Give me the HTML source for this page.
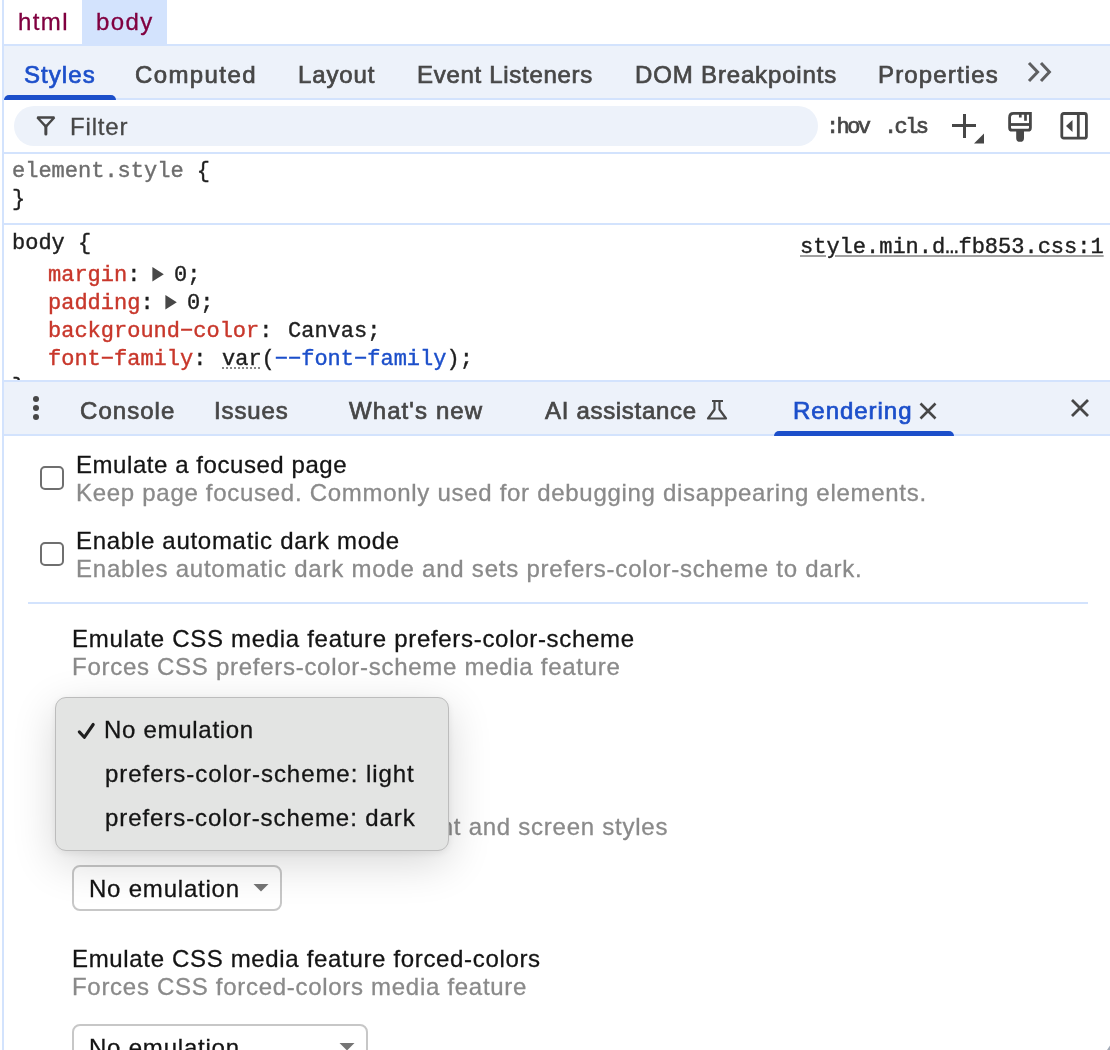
<!DOCTYPE html>
<html><head><meta charset="utf-8">
<style>
*{margin:0;padding:0;box-sizing:border-box}
html,body{width:1110px;height:1050px;overflow:hidden;background:#fff}
body{position:relative;font-family:"Liberation Sans",sans-serif;color:#1f1f1f;-webkit-font-smoothing:antialiased}
.a{position:absolute;white-space:nowrap;will-change:transform}
.t{font-size:24px;line-height:28px}
.m{font-family:"Liberation Mono",monospace;font-size:22px;line-height:28px;-webkit-text-stroke:0.4px currentColor}
.bd{background:#d3e3fd}
</style></head><body>
<!-- left border -->
<div class="a bd" style="left:2px;top:0;width:2px;height:1050px"></div>
<!-- breadcrumb -->
<div class="a bd" style="left:82px;top:0;width:85px;height:44px"></div>
<div class="a bd" style="left:4px;top:44px;width:1106px;height:2px"></div>
<!-- tab bar -->
<div class="a" style="left:4px;top:46px;width:1106px;height:52px;background:#edf2fa"></div>
<div class="a bd" style="left:4px;top:98px;width:1106px;height:2px"></div>
<div class="a" style="left:4px;top:95px;width:112px;height:5px;background:#1c4fca;border-radius:5px 5px 0 0"></div>
<svg class="a" style="left:1026px;top:60px" width="30" height="24" viewBox="0 0 30 24"><path d="M3 3 L11.6 12 L3 21 M15 3 L23.4 12 L15 21" fill="none" stroke="#5e5f61" stroke-width="3"/></svg>
<!-- filter bar -->
<div class="a" style="left:14px;top:106px;width:804px;height:40px;border-radius:20px;background:#edf2fa"></div>
<svg class="a" style="left:34px;top:114px" width="24" height="24" viewBox="0 0 24 24"><path d="M3.4 3.5 H20.3 L11.85 12.6 Z" fill="none" stroke="#474747" stroke-width="2.4" stroke-linejoin="bevel"/><path d="M11.85 12 V20" fill="none" stroke="#474747" stroke-width="3" stroke-linecap="round"/></svg>
<div class="a" style="left:826px;top:114px;font-size:22px;line-height:28px;color:#474747;font-family:'Liberation Mono',monospace;letter-spacing:-2.6px;-webkit-text-stroke:0.7px #474747">:hov</div>
<div class="a" style="left:884px;top:114px;font-size:22px;line-height:28px;color:#474747;font-family:'Liberation Mono',monospace;letter-spacing:-2.6px;-webkit-text-stroke:0.7px #474747">.cls</div>
<svg class="a" style="left:948px;top:110px" width="40" height="36" viewBox="0 0 40 36"><path d="M4 15.5 H28 M16.5 4 V28" fill="none" stroke="#474747" stroke-width="3"/><path d="M26 33.5 L36 23.5 V33.5 Z" fill="#474747"/></svg>
<svg class="a" style="left:1004px;top:108px" width="32" height="38" viewBox="0 0 32 38"><path d="M9.6 5.4 H26.4 V19.7 Q26.4 22.2 23.9 22.2 H8.1 Q5.6 22.2 5.6 19.7 V9.4 Q5.6 5.4 9.6 5.4 Z" fill="none" stroke="#474747" stroke-width="2.8"/><path d="M5 16.5 H27" stroke="#474747" stroke-width="2.8"/><path d="M16.3 5 V9.6 M21.5 5 V12.7" fill="none" stroke="#474747" stroke-width="2.7"/><path d="M12.2 22 H20 V29.9 Q20 33.8 16.1 33.8 Q12.2 33.8 12.2 29.9 Z" fill="#474747"/></svg>
<svg class="a" style="left:1056px;top:108px" width="36" height="36" viewBox="0 0 36 36"><rect x="5.8" y="5.5" width="24.6" height="24.7" rx="2" fill="none" stroke="#474747" stroke-width="2.8"/><path d="M22.3 5 V31" stroke="#474747" stroke-width="2.8"/><path d="M10 18 L16.5 12 V24 Z" fill="#474747"/></svg>
<div class="a bd" style="left:4px;top:152px;width:1106px;height:2px"></div>
<!-- element.style -->
<div class="a m" style="left:12px;top:158px"><span style="color:#6e6e6e">element.style</span> {</div>
<div class="a m" style="left:12px;top:186px">}</div>
<div class="a bd" style="left:4px;top:223px;width:1106px;height:2px"></div>
<!-- body rule -->
<div class="a m" style="left:12px;top:230px">body {</div>
<div class="a m" style="left:800px;top:234px;text-decoration:underline;text-decoration-color:#a0a0a0">style.min.d…fb853.css:1</div>
<div class="a m" style="left:48px;top:262px"><span style="color:#c8372b">margin</span>:</div>
<svg class="a" style="left:150px;top:265px" width="16" height="20" viewBox="0 0 16 20"><path d="M2.4 2 L13.8 9.3 L2.4 16.6 Z" fill="#474747"/></svg>
<div class="a m" style="left:174px;top:262px">0;</div>
<div class="a m" style="left:48px;top:290px"><span style="color:#c8372b">padding</span>:</div>
<svg class="a" style="left:163px;top:293px" width="16" height="20" viewBox="0 0 16 20"><path d="M2.4 2 L13.8 9.3 L2.4 16.6 Z" fill="#474747"/></svg>
<div class="a m" style="left:187px;top:290px">0;</div>
<div class="a m" style="left:48px;top:318px"><span style="color:#c8372b">background−color</span>:</div>
<div class="a m" style="left:288.1px;top:318px">Canvas;</div>
<div class="a m" style="left:48px;top:346px"><span style="color:#c8372b">font−family</span>:</div>
<div class="a m" style="left:222.1px;top:346px"><span style="text-decoration:underline dotted #888">var</span>(<span style="color:#1c4fca">−−font−family</span>);</div>
<div class="a m" style="left:12px;top:374px">}</div>
<!-- drawer -->
<div class="a bd" style="left:4px;top:380px;width:1106px;height:2px"></div>
<div class="a" style="left:4px;top:382px;width:1106px;height:52px;background:#edf2fa"></div>
<div class="a bd" style="left:4px;top:434px;width:1106px;height:2px"></div>
<div class="a" style="left:33px;top:396px;width:6px;height:6px;border-radius:3px;background:#474747"></div>
<div class="a" style="left:33px;top:405px;width:6px;height:6px;border-radius:3px;background:#474747"></div>
<div class="a" style="left:33px;top:414px;width:6px;height:6px;border-radius:3px;background:#474747"></div>
<svg class="a" style="left:704px;top:398px" width="26" height="24" viewBox="0 0 26 24"><path d="M8 3 H19 M10.5 3 V11.5 L4 20.5 H22 L15.5 11.5 V3" fill="none" stroke="#474747" stroke-width="2.2" stroke-linejoin="round"/></svg>
<svg class="a" style="left:916px;top:399px" width="24" height="24" viewBox="0 0 24 24"><path d="M4.5 4.5 L19.5 19.5 M19.5 4.5 L4.5 19.5" fill="none" stroke="#474747" stroke-width="2.6"/></svg>
<div class="a" style="left:774px;top:431px;width:180px;height:5px;background:#1c4fca;border-radius:5px 5px 0 0"></div>
<svg class="a" style="left:1068px;top:396px" width="24" height="24" viewBox="0 0 24 24"><path d="M4 4 L20 20 M20 4 L4 20" fill="none" stroke="#474747" stroke-width="2.8"/></svg>
<!-- rendering content -->
<div class="a" style="left:40px;top:466px;width:24px;height:24px;border:2px solid #6f6f6f;border-radius:5px"></div>
<div class="a" style="left:40px;top:542px;width:24px;height:24px;border:2px solid #6f6f6f;border-radius:5px"></div>
<div class="a bd" style="left:28px;top:602px;width:1060px;height:2px"></div>
<div class="a" style="left:72px;top:705px;width:210px;height:46px;border:2px solid #c7c7c7;border-radius:8px"></div>
<div class="a" style="left:72px;top:865px;width:210px;height:46px;border:2px solid #c7c7c7;border-radius:8px"></div>
<svg class="a" style="left:252px;top:882px" width="18" height="12" viewBox="0 0 18 12"><path d="M1.5 2 H16.5 L9 9.5 Z" fill="#757575"/></svg>
<div class="a" style="left:72px;top:1024px;width:296px;height:46px;border:2px solid #c7c7c7;border-radius:8px"></div>
<svg class="a" style="left:338px;top:1041px" width="18" height="12" viewBox="0 0 18 12"><path d="M1.5 2 H16.5 L9 9.5 Z" fill="#757575"/></svg>
<div class="a t" style="left:18.15px;top:8.30px;color:#800040;letter-spacing:1.400px;-webkit-text-stroke:0.3px #800040;">html</div>
<div class="a t" style="left:95.65px;top:8.30px;color:#800040;letter-spacing:1.400px;-webkit-text-stroke:0.3px #800040;">body</div>
<div class="a t" style="left:23.85px;top:60.50px;color:#1c4fca;letter-spacing:1.060px;-webkit-text-stroke:0.7px #1c4fca;">Styles</div>
<div class="a t" style="left:135.35px;top:60.50px;color:#474747;letter-spacing:1.400px;-webkit-text-stroke:0.7px #474747;">Computed</div>
<div class="a t" style="left:298.35px;top:60.50px;color:#474747;letter-spacing:0.860px;-webkit-text-stroke:0.7px #474747;">Layout</div>
<div class="a t" style="left:417.35px;top:60.50px;color:#474747;letter-spacing:0.700px;-webkit-text-stroke:0.7px #474747;">Event Listeners</div>
<div class="a t" style="left:634.85px;top:60.50px;color:#474747;letter-spacing:0.843px;-webkit-text-stroke:0.7px #474747;">DOM Breakpoints</div>
<div class="a t" style="left:878.35px;top:61.00px;color:#474747;letter-spacing:1.144px;-webkit-text-stroke:0.7px #474747;">Properties</div>
<div class="a t" style="left:69.65px;top:112.80px;color:#474747;letter-spacing:0.840px;-webkit-text-stroke:0.3px #474747;">Filter</div>
<div class="a t" style="left:80.35px;top:396.80px;color:#474747;letter-spacing:1.050px;-webkit-text-stroke:0.7px #474747;">Console</div>
<div class="a t" style="left:213.85px;top:396.80px;color:#474747;letter-spacing:0.860px;-webkit-text-stroke:0.7px #474747;">Issues</div>
<div class="a t" style="left:349.35px;top:396.80px;color:#474747;letter-spacing:1.089px;-webkit-text-stroke:0.7px #474747;">What's new</div>
<div class="a t" style="left:545.35px;top:396.80px;color:#474747;letter-spacing:0.692px;-webkit-text-stroke:0.7px #474747;">AI assistance</div>
<div class="a t" style="left:793.35px;top:397.00px;color:#1c4fca;letter-spacing:0.975px;-webkit-text-stroke:0.7px #1c4fca;">Rendering</div>
<div class="a t" style="left:75.65px;top:451.00px;color:#141414;letter-spacing:0.557px;-webkit-text-stroke:0.3px #141414;">Emulate a focused page</div>
<div class="a t" style="left:75.65px;top:479.00px;color:#8a8a8a;letter-spacing:0.709px;-webkit-text-stroke:0.3px #8a8a8a;">Keep page focused. Commonly used for debugging disappearing elements.</div>
<div class="a t" style="left:75.65px;top:527.00px;color:#141414;letter-spacing:0.708px;-webkit-text-stroke:0.3px #141414;">Enable automatic dark mode</div>
<div class="a t" style="left:75.65px;top:555.00px;color:#8a8a8a;letter-spacing:0.780px;-webkit-text-stroke:0.3px #8a8a8a;">Enables automatic dark mode and sets prefers-color-scheme to dark.</div>
<div class="a t" style="left:71.65px;top:625.00px;color:#141414;letter-spacing:0.693px;-webkit-text-stroke:0.3px #141414;">Emulate CSS media feature prefers-color-scheme</div>
<div class="a t" style="left:71.65px;top:653.20px;color:#8a8a8a;letter-spacing:0.720px;-webkit-text-stroke:0.3px #8a8a8a;">Forces CSS prefers-color-scheme media feature</div>
<div class="a t" style="left:71.65px;top:785.00px;color:#141414;letter-spacing:0.650px;-webkit-text-stroke:0.3px #141414;">Emulate CSS media type</div>
<div class="a t" style="left:71.65px;top:813.20px;color:#8a8a8a;letter-spacing:0.754px;-webkit-text-stroke:0.3px #8a8a8a;">Forces media type for testing print and screen styles</div>
<div class="a t" style="left:89.15px;top:874.50px;color:#141414;letter-spacing:0.791px;-webkit-text-stroke:0.3px #141414;">No emulation</div>
<div class="a t" style="left:71.65px;top:945.00px;color:#141414;letter-spacing:0.663px;-webkit-text-stroke:0.3px #141414;">Emulate CSS media feature forced-colors</div>
<div class="a t" style="left:71.65px;top:973.20px;color:#8a8a8a;letter-spacing:0.708px;-webkit-text-stroke:0.3px #8a8a8a;">Forces CSS forced-colors media feature</div>
<div class="a t" style="left:89.35px;top:1033.50px;color:#141414;letter-spacing:0.791px;-webkit-text-stroke:0.3px #141414;">No emulation</div>
<!-- popup -->
<div class="a" style="left:55px;top:697px;width:394px;height:154px;background:#e3e4e3;border:1px solid #bcbcbc;border-radius:11px;box-shadow:0 12px 44px rgba(0,0,0,0.16),0 2px 8px rgba(0,0,0,0.07)"></div>
<svg class="a" style="left:74px;top:719px" width="24" height="24" viewBox="0 0 24 24"><path d="M5.3 12.9 L10.3 18.3 L19.2 5.5" fill="none" stroke="#1f1f1f" stroke-width="3.1" stroke-linecap="round" stroke-linejoin="round"/></svg>
<div class="a t" style="left:103.75px;top:716.00px;color:#141414;letter-spacing:0.709px;-webkit-text-stroke:0.3px #141414;">No emulation</div>
<div class="a t" style="left:104.65px;top:760.00px;color:#141414;letter-spacing:0.946px;-webkit-text-stroke:0.3px #141414;">prefers-color-scheme: light</div>
<div class="a t" style="left:104.65px;top:803.70px;color:#141414;letter-spacing:0.920px;-webkit-text-stroke:0.3px #141414;">prefers-color-scheme: dark</div>
<svg class="a" style="left:1100px;top:1040px" width="10" height="10" viewBox="0 0 10 10"><path d="M10 5.5 L10 10 L7 10 Z" fill="#a4acb8"/></svg>
</body></html>
